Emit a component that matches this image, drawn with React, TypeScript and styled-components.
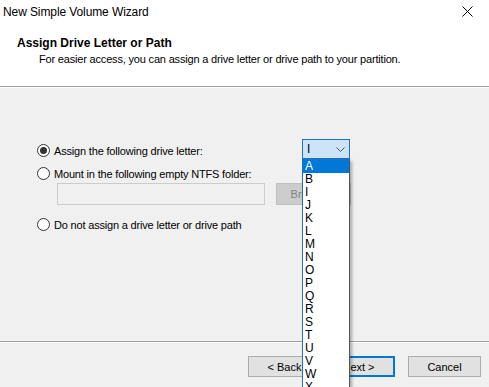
import React from 'react'
import styled, { createGlobalStyle } from 'styled-components'

const GlobalStyle = createGlobalStyle`
  html, body {
    margin: 0;
    padding: 0;
    background: #f0f0f0;
  }
  body {
    font-family: 'Liberation Sans', Arial, sans-serif;
    font-size: 12px;
    color: #000;
  }
`

const letters = ['A', 'B', 'I', 'J', 'K', 'L', 'M', 'N', 'O', 'P', 'Q', 'R', 'S', 'T', 'U', 'V', 'W', 'X']

export const App = () => {
  return (
    <Window>
      <GlobalStyle />
      <Header>
        <TitleBar>
          <span>New Simple Volume Wizard</span>
          <CloseButton>
            <svg width='11' height='11' viewBox='0 0 11 11'>
              <path d='M0.5 0.5 L10.5 10.5 M10.5 0.5 L0.5 10.5' stroke='#000' strokeWidth='1' />
            </svg>
          </CloseButton>
        </TitleBar>
        <Heading>Assign Drive Letter or Path</Heading>
        <SubHeading>For easier access, you can assign a drive letter or drive path to your partition.</SubHeading>
      </Header>

      <Body>
        <Options>
          <OptionRow>
            <Choice $width={265}>
              <Radio $checked />
              <span>Assign the following drive letter:</span>
            </Choice>
            <ComboWrap>
              <Combo>
                <span>I</span>
                <svg width='9' height='5' viewBox='0 0 9 5'>
                  <path d='M0.5 0.5 L4.5 4.5 L8.5 0.5' fill='none' stroke='#555' strokeWidth='1' />
                </svg>
              </Combo>
              <DropList>
                {letters.map((l, i) => (
                  <DropItem key={l} $selected={i === 0}>{l}</DropItem>
                ))}
              </DropList>
            </ComboWrap>
          </OptionRow>
          <OptionRow>
            <Choice>
              <Radio />
              <span>Mount in the following empty NTFS folder:</span>
            </Choice>
          </OptionRow>
          <FolderRow>
            <FolderInput />
            <BrowseButton>Browse...</BrowseButton>
          </FolderRow>
          <OptionRow>
            <Choice>
              <Radio />
              <span>Do not assign a drive letter or drive path</span>
            </Choice>
          </OptionRow>
        </Options>
      </Body>

      <Footer>
        <ButtonGroup>
          <WizButton>&lt; Back</WizButton>
          <WizButton $primary>Next &gt;</WizButton>
        </ButtonGroup>
        <WizButton>Cancel</WizButton>
      </Footer>
    </Window>
  )
}

export default App

const Window = styled.div`
  width: 489px;
  height: 387px;
  overflow: hidden;
  display: flex;
  flex-direction: column;
  background: #f0f0f0;
`

const Header = styled.div`
  height: 86px;
  background: #fff;
  border-bottom: 1px solid #a0a0a0;
  box-shadow: 0 1px 0 #fff;
  display: flex;
  flex-direction: column;
`

const TitleBar = styled.div`
  height: 24px;
  padding-left: 3px;
  display: flex;
  align-items: center;
  justify-content: space-between;
  font-size: 12px;
  letter-spacing: -0.1px;
`

const CloseButton = styled.div`
  width: 30px;
  display: flex;
  justify-content: center;
  padding-right: 7px;
  padding-bottom: 2px;
`

const Heading = styled.div`
  margin-top: 12px;
  padding-left: 17px;
  font-weight: bold;
  font-size: 12px;
  line-height: 15px;
`

const SubHeading = styled.div`
  padding-left: 39px;
  font-size: 11px;
  line-height: 16px;
  letter-spacing: -0.18px;
`

const Body = styled.div`
  flex: 1;
  padding: 52px 0 0 37px;
  border-bottom: 1px solid #a0a0a0;
  box-shadow: 0 1px 0 #fff;
`

const Options = styled.div`
  display: flex;
  flex-direction: column;
`

const OptionRow = styled.div`
  display: flex;
  align-items: center;
  height: 23px;
`

const Choice = styled.label<{ $width?: number }>`
  display: flex;
  align-items: center;
  gap: 4px;
  font-size: 11px;
  letter-spacing: -0.18px;
  width: ${p => (p.$width ? `${p.$width}px` : 'auto')};
`

const Radio = styled.span<{ $checked?: boolean }>`
  width: 11px;
  height: 11px;
  border-radius: 50%;
  border: 1px solid #333;
  background: #fff;
  display: flex;
  align-items: center;
  justify-content: center;

  &::after {
    content: '';
    width: 7px;
    height: 7px;
    border-radius: 50%;
    background: #333;
    display: ${p => (p.$checked ? 'block' : 'none')};
  }
`

const ComboWrap = styled.div`
  position: relative;
  margin-top: -3px;
`

const Combo = styled.div`
  height: 18px;
  border: 1px solid #1a73c8;
  background: #cce4f7;
  display: flex;
  align-items: center;
  justify-content: space-between;
  padding: 0 4px 0 4px;
  box-sizing: content-box;
  width: 38px;
  font-size: 12px;
`

const DropList = styled.div`
  position: absolute;
  top: 20px;
  left: 0;
  width: 46px;
  background: #fff;
  border: 1px solid #1a73c8;
  border-right-color: #555;
  box-shadow: 2px 2px 3px rgba(0, 0, 0, 0.3);
  z-index: 5;
`

const DropItem = styled.div<{ $selected?: boolean }>`
  height: 13px;
  line-height: 13px;
  padding-left: 2px;
  font-size: 12px;
  background: ${p => (p.$selected ? '#0078d7' : '#fff')};
  color: ${p => (p.$selected ? '#fff' : '#000')};
`

const FolderRow = styled.div`
  display: flex;
  gap: 11px;
  padding-left: 20px;
  margin-top: -2px;
  margin-bottom: 8px;
`

const FolderInput = styled.div`
  width: 206px;
  height: 20px;
  border: 1px solid #ccc;
  background: #f0f0f0;
`

const BrowseButton = styled.div`
  width: 73px;
  height: 20px;
  border: 1px solid #bfbfbf;
  background: #ccc;
  color: #838383;
  font-size: 11px;
  display: flex;
  align-items: center;
  justify-content: center;
`

const Footer = styled.div`
  height: 45px;
  box-sizing: border-box;
  padding: 14px 8px 0 0;
  display: flex;
  justify-content: flex-end;
  align-items: flex-start;
  gap: 13px;
`

const ButtonGroup = styled.div`
  display: flex;
  gap: 1px;
`

const WizButton = styled.div<{ $primary?: boolean }>`
  width: 73px;
  height: 21px;
  box-sizing: border-box;
  border: ${p => (p.$primary ? '2px solid #0078d7' : '1px solid #adadad')};
  background: #e1e1e1;
  font-size: 11px;
  display: flex;
  align-items: center;
  justify-content: center;
`
